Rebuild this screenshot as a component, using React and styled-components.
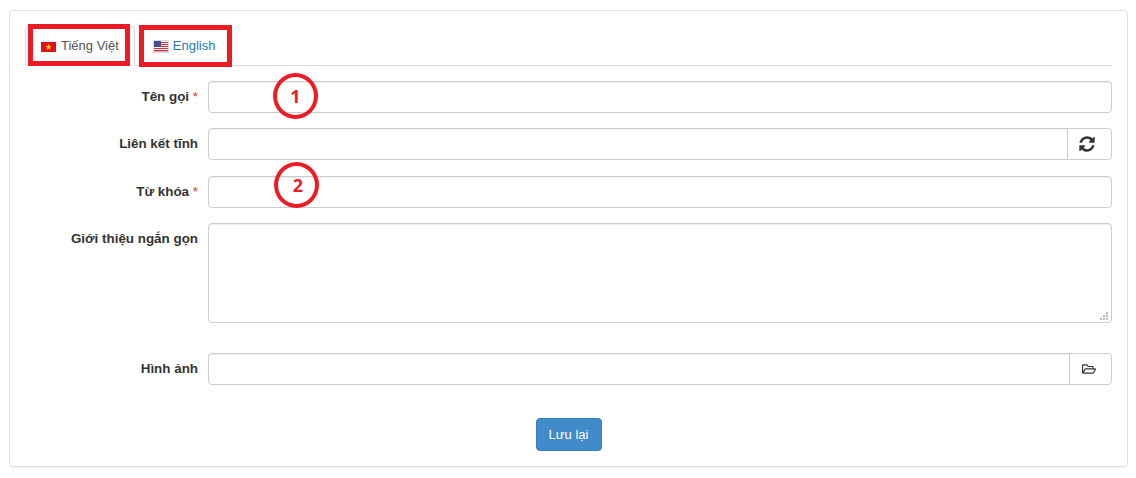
import React from 'react';
import styled, { createGlobalStyle } from 'styled-components';
import { FaRegFolderOpen } from 'react-icons/fa';

const GlobalStyle = createGlobalStyle`
  html, body {
    margin: 0;
    background: #fff;
    font-family: 'Liberation Sans', Arial, sans-serif;
    font-size: 13px;
    color: #333;
  }
  * { box-sizing: border-box; }
`;

const Page = styled.div`
  position: relative;
  width: 1136px;
  height: 478px;
  padding: 10px 8px 11px 9px;
`;
const Panel = styled.form`
  height: 457px;
  border: 1px solid #ddd;
  border-radius: 4px;
  padding: 15px 15px 0 15px;
  box-shadow: 0 1px 1px rgba(0, 0, 0, 0.05);
`;
const Tabs = styled.ul`
  display: flex;
  height: 40px;
  margin: 0 0 15px;
  padding: 0;
  list-style: none;
  border-bottom: 1px solid #ddd;
`;
const Tab = styled.li`
  display: flex;
  align-items: center;
  gap: 5px;
  height: 40px;
  margin-right: 2px;
  padding: 0 15px 2px;
  border: 1px solid ${({ $active }) => ($active ? '#ddd' : 'transparent')};
  border-bottom-color: ${({ $active }) => ($active ? '#fff' : 'transparent')};
  border-radius: 4px 4px 0 0;
  color: ${({ $active }) => ($active ? '#555' : '#1f77b4')};
  font-size: 13px;
`;
const Row = styled.div`
  display: flex;
  align-items: flex-start;
  margin-bottom: ${({ $gap }) => $gap}px;
`;
const Label = styled.label`
  flex: 0 0 173px;
  padding: 8px 0 0;
  margin-right: 10px;
  text-align: right;
  font-weight: bold;
  font-size: 13.4px;
  line-height: 16px;
  color: #333;
`;
const Required = styled.span`
  font-weight: normal;
  color: #e8262d;
`;
const Input = styled.input`
  flex: 1;
  min-width: 0;
  height: 32px;
  padding: 6px 12px;
  background: #fff;
  border: 1px solid #ccc;
  border-radius: ${({ $joined }) => ($joined ? '4px 0 0 4px' : '4px')};
  box-shadow: inset 0 1px 1px rgba(0, 0, 0, 0.075);
`;
const TextArea = styled.textarea`
  flex: 1;
  display: block;
  height: 100px;
  padding: 6px 12px;
  background: #fff;
  border: 1px solid #ccc;
  border-radius: 4px;
  box-shadow: inset 0 1px 1px rgba(0, 0, 0, 0.075);

  &::-webkit-resizer {
    background:
      linear-gradient(#bbb, #bbb) 10px 5px / 2px 2px no-repeat,
      linear-gradient(#bbb, #bbb) 7px 8px / 2px 2px no-repeat,
      linear-gradient(#bbb, #bbb) 10px 8px / 2px 2px no-repeat,
      linear-gradient(#bbb, #bbb) 4px 11px / 2px 2px no-repeat,
      linear-gradient(#bbb, #bbb) 7px 11px / 2px 2px no-repeat,
      linear-gradient(#bbb, #bbb) 10px 11px / 2px 2px no-repeat;
  }
`;
const AddonButton = styled.button`
  flex: 0 0 ${({ $width }) => $width}px;
  display: flex;
  align-items: center;
  justify-content: center;
  height: 32px;
  margin-left: -1px;
  padding: 0 ${({ $inset }) => $inset}px 0 0;
  background: #fff;
  border: 1px solid #ccc;
  border-radius: 0 4px 4px 0;
  color: #333;
`;
const Actions = styled.div`
  display: flex;
  justify-content: center;
  padding-top: 33px;
`;
const SaveButton = styled.button`
  width: 66px;
  height: 33px;
  padding: 0;
  background: #428bca;
  border: 1px solid #357ebd;
  border-radius: 4px;
  color: #fff;
  font-family: inherit;
  font-size: 13px;
`;
const Mark = styled.div`
  position: absolute;
  left: ${({ $x }) => $x}px;
  top: ${({ $y }) => $y}px;
  width: ${({ $w }) => $w}px;
  height: ${({ $h }) => $h}px;
  border: 5px solid #ed1c24;
  pointer-events: none;
`;
const Callout = styled(Mark)`
  display: flex;
  align-items: center;
  justify-content: center;
  width: 45px;
  height: 46px;
  padding-left: ${({ $nudge = 0 }) => $nudge}px;
  border-width: 4.5px;
  border-radius: 50%;
  color: #ed1c24;
  font-family: 'Open Sans', sans-serif;
  font-weight: bold;
  font-size: 18px;
`;
const Flag = styled.svg`
  margin-top: ${({ $drop }) => $drop}px;
  margin-right: ${({ $pull = 0 }) => -$pull}px;
`;

const VietnamFlag = () => (
  <Flag $drop={4} width="15" height="10" viewBox="0 0 15 10">
    <rect width="15" height="10" fill="#e60f14" />
    <polygon
      fill="#ffe100"
      points="7.5,1.8 8.3,4.1 10.7,4.1 8.8,5.5 9.5,7.9 7.5,6.4 5.5,7.9 6.2,5.5 4.3,4.1 6.7,4.1"
    />
  </Flag>
);

const UsFlag = () => (
  <Flag $drop={3} $pull={1} width="16" height="13" viewBox="0 0 16 13">
    <rect width="16" height="13" fill="#dcdce0" />
    <rect x="1" y="1" width="14" height="11" fill="#f4f4f6" />
    <rect x="1" y="2" width="14" height="1" fill="#d8343f" />
    <rect x="1" y="4" width="14" height="1" fill="#d8343f" />
    <rect x="1" y="6" width="14" height="1" fill="#d8343f" />
    <rect x="1" y="8" width="14" height="1" fill="#d8343f" />
    <rect x="1" y="10" width="14" height="1.4" fill="#d8343f" />
    <rect x="1" y="1" width="7" height="6" fill="#4a4f8f" />
  </Flag>
);

const RefreshIcon = () => (
  <svg width="18" height="18" viewBox="0 0 1792 1792" fill="#333">
    <path d="M1639 1056q0 5-1 7-64 268-268 434.5t-478 166.5q-146 0-282.5-55t-243.5-157l-129 129q-19 19-45 19t-45-19-19-45v-448q0-26 19-45t45-19h448q26 0 45 19t19 45-19 45l-137 137q71 66 161 102t187 36q134 0 250-65t186-179q11-17 53-117 8-23 30-23h192q13 0 22.5 9.5t9.5 22.5zm25-800v448q0 26-19 45t-45 19h-448q-26 0-45-19t-19-45 19-45l138-138q-148-137-349-137-134 0-250 65t-186 179q-11 17-53 117-8 23-30 23h-199q-13 0-22.5-9.5t-9.5-22.5v-7q65-268 270-434.5t480-166.5q146 0 284 55.5t245 156.5l130-129q19-19 45-19t45 19 19 45z" />
  </svg>
);

const App = () => (
  <Page>
    <GlobalStyle />
    <Panel>
      <Tabs>
        <Tab $active>
          <VietnamFlag />
          Tiếng Việt
        </Tab>
        <Tab>
          <UsFlag />
          English
        </Tab>
      </Tabs>

      <Row $gap={15}>
        <Label>
          Tên gọi <Required>*</Required>
        </Label>
        <Input />
      </Row>
      <Row $gap={16}>
        <Label>Liên kết tĩnh</Label>
        <Input $joined />
        <AddonButton type="button" $width={45} $inset={5}>
          <RefreshIcon />
        </AddonButton>
      </Row>
      <Row $gap={15}>
        <Label>
          Từ khóa <Required>*</Required>
        </Label>
        <Input />
      </Row>
      <Row $gap={30}>
        <Label>Giới thiệu ngắn gọn</Label>
        <TextArea />
      </Row>
      <Row $gap={0}>
        <Label>Hình ảnh</Label>
        <Input $joined />
        <AddonButton type="button" $width={43} $inset={3}>
          <FaRegFolderOpen size={14} />
        </AddonButton>
      </Row>

      <Actions>
        <SaveButton type="button">Lưu lại</SaveButton>
      </Actions>
    </Panel>

    <Mark $x={28} $y={24} $w={102} $h={42} />
    <Mark $x={139} $y={25} $w={93} $h={42} />
    <Callout $x={273} $y={73}>1</Callout>
    <Callout $x={274} $y={162} $nudge={3}>2</Callout>
  </Page>
);

export default App;
